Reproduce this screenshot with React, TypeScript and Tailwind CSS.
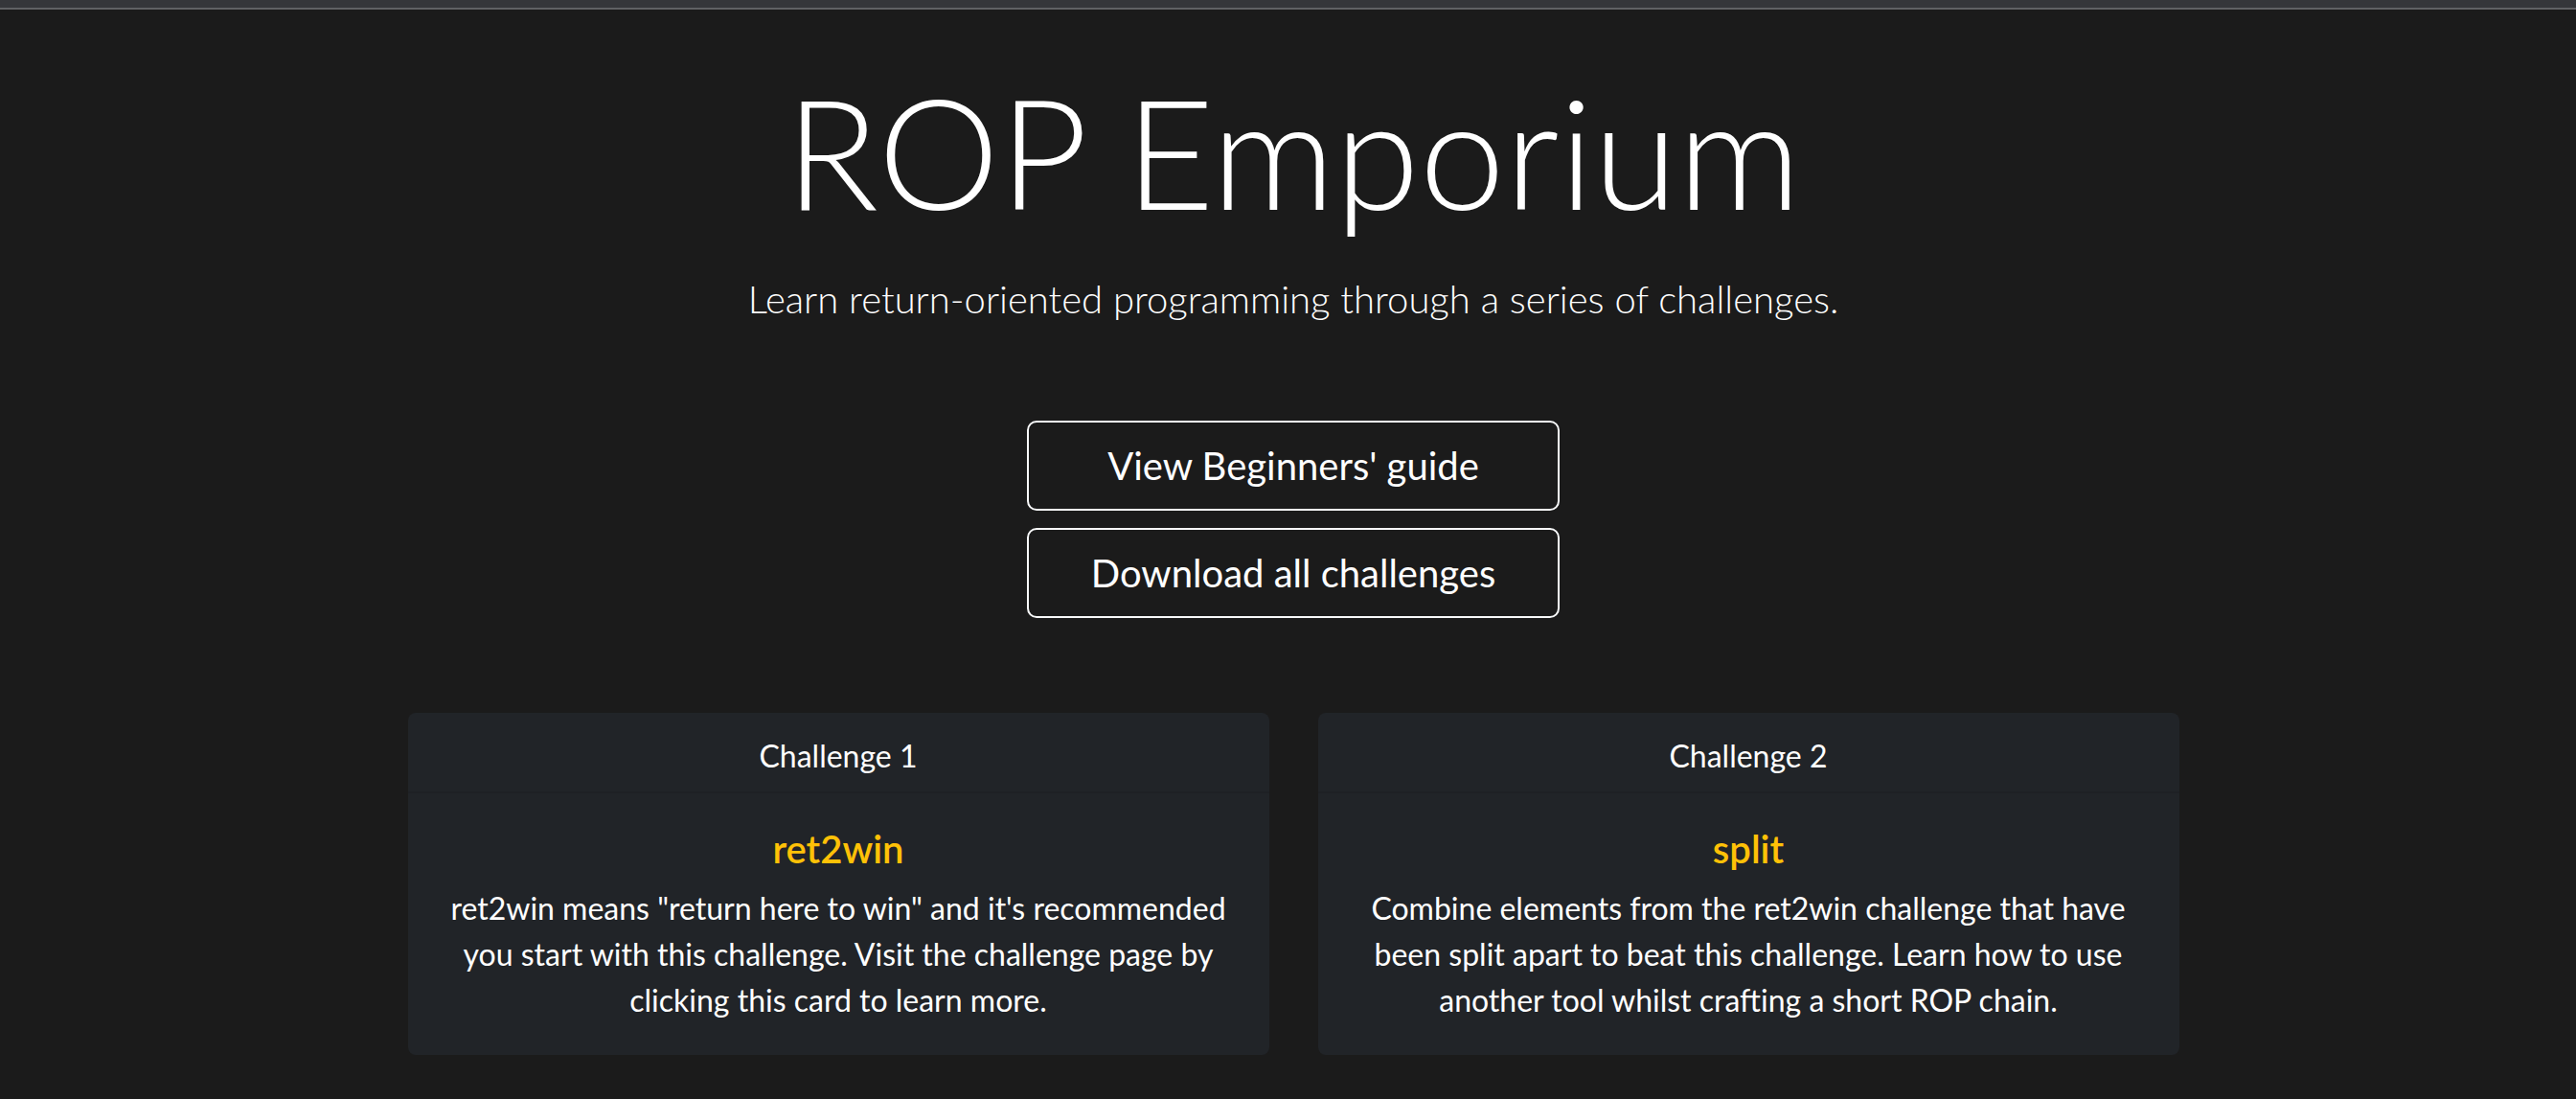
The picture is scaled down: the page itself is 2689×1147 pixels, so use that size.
import React from 'react';

const challenges = [
  {
    n: 1,
    name: 'ret2win',
    text: `ret2win means "return here to win" and it's recommended you start with this challenge. Visit the challenge page by clicking this card to learn more.`,
  },
  {
    n: 2,
    name: 'split',
    text: 'Combine elements from the ret2win challenge that have been split apart to beat this challenge. Learn how to use another tool whilst crafting a short ROP chain.',
  },
];

export default function App() {
  return (
    <div className="min-h-screen bg-[#1b1b1b] text-white font-['Lato',sans-serif]">
      <div className="h-[10px] bg-[#35363a] border-b-2 border-[#606164]" />
      <div className="pl-[11px] text-center">
        <h1 className="mt-[51px] text-[160px] font-light leading-[1.2]">ROP Emporium</h1>
        <p className="mt-[29px] text-[40px] font-light leading-[1.5]">
          Learn return-oriented programming through a series of challenges.
        </p>
        <div className="mt-[97px] flex flex-col items-center gap-[18px]">
          <button className="w-[556px] h-[94px] rounded-[10px] border-2 border-[#f8f9fa] text-[40px] leading-[1.5]">
            View Beginners' guide
          </button>
          <button className="w-[556px] h-[94px] rounded-[10px] border-2 border-[#f8f9fa] text-[40px] leading-[1.5]">
            Download all challenges
          </button>
        </div>
        <div className="mt-[99px] mx-auto w-[1849px] grid grid-cols-2 gap-[51px]">
          {challenges.map((c) => (
            <div key={c.n} className="h-[357px] rounded-[8px] bg-[#212428] flex flex-col">
              <div className="h-[84px] pt-[8px] flex items-center justify-center text-[32px] border-b-2 border-[#1e2024]">
                Challenge {c.n}
              </div>
              <div className="px-[40px] pt-[34px]">
                <h5 className="text-[40px] font-semibold leading-[1.2] text-[#ffc107] mb-[14px]">{c.name}</h5>
                <p className="text-[32px] leading-[1.5]">{c.text}</p>
              </div>
            </div>
          ))}
        </div>
      </div>
    </div>
  );
}
